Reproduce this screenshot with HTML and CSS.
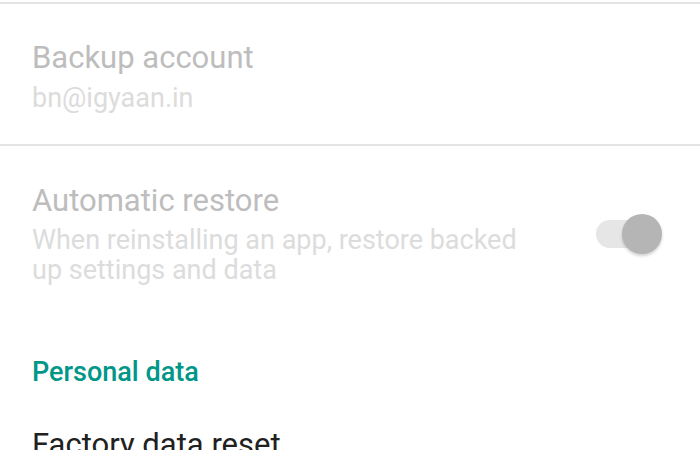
FILE: index.html
```html
<!DOCTYPE html>
<html>
<head>
<meta charset="utf-8">
<link rel="stylesheet" href="styles.css">
</head>
<body>
<div class="screen">
  <div class="divider divider-top"></div>
  <div class="item item-backup">
    <div class="text">
      <div class="title disabled">Backup account</div>
      <div class="summary disabled">bn@igyaan.in</div>
    </div>
  </div>
  <div class="divider"></div>
  <div class="item item-restore">
    <div class="text">
      <div class="title disabled">Automatic restore</div>
      <div class="summary disabled">When reinstalling an app, restore backed up settings and data</div>
    </div>
    <div class="switch">
      <div class="track"></div>
      <div class="thumb"></div>
    </div>
  </div>
  <div class="category">Personal data</div>
  <div class="item item-factory">
    <div class="text">
      <div class="title">Factory data reset</div>
    </div>
  </div>
</div>
</body>
</html>
```
FILE: styles.css
```css
html, body {
  margin: 0;
  padding: 0;
  background: #ffffff;
}
.screen {
  width: 700px;
  height: 450px;
  overflow: hidden;
  display: flex;
  flex-direction: column;
  font-family: Roboto, "Noto Sans", sans-serif;
}
.divider {
  height: 2px;
  background: #e4e4e4;
  flex-shrink: 0;
}
.divider-top {
  margin-top: 2px;
}
.item {
  display: flex;
  align-items: center;
  padding: 0 38px 0 32px;
  flex-shrink: 0;
}
.text {
  flex: 1;
  display: flex;
  flex-direction: column;
}
.title {
  font-size: 31px;
  line-height: 38px;
  color: #212121;
}
.summary {
  font-size: 27px;
  line-height: 32px;
  margin-top: 5px;
}
.title.disabled {
  color: #bdbdbd;
}
.summary.disabled {
  color: #dcdcdc;
}
.item-backup {
  padding-top: 35px;
  padding-bottom: 30px;
}
.item-restore {
  padding-top: 36px;
  padding-bottom: 31px;
}
.item-restore .summary {
  line-height: 30px;
  margin-top: 5px;
  margin-right: 57px;
}
.switch {
  position: relative;
  width: 66px;
  height: 40px;
  flex-shrink: 0;
}
.track {
  position: absolute;
  left: 0;
  top: 6px;
  width: 58px;
  height: 28px;
  border-radius: 14px;
  background: #e6e6e6;
}
.thumb {
  position: absolute;
  left: 26px;
  top: 0;
  width: 40px;
  height: 40px;
  border-radius: 50%;
  background: #b5b5b5;
  box-shadow: 0 2px 3px rgba(0,0,0,0.18);
}
.category {
  padding: 40px 32px 0 32px;
  font-size: 27px;
  line-height: 32px;
  font-weight: 500;
  color: #009688;
  flex-shrink: 0;
}
.item-factory {
  padding-top: 38px;
}
```
